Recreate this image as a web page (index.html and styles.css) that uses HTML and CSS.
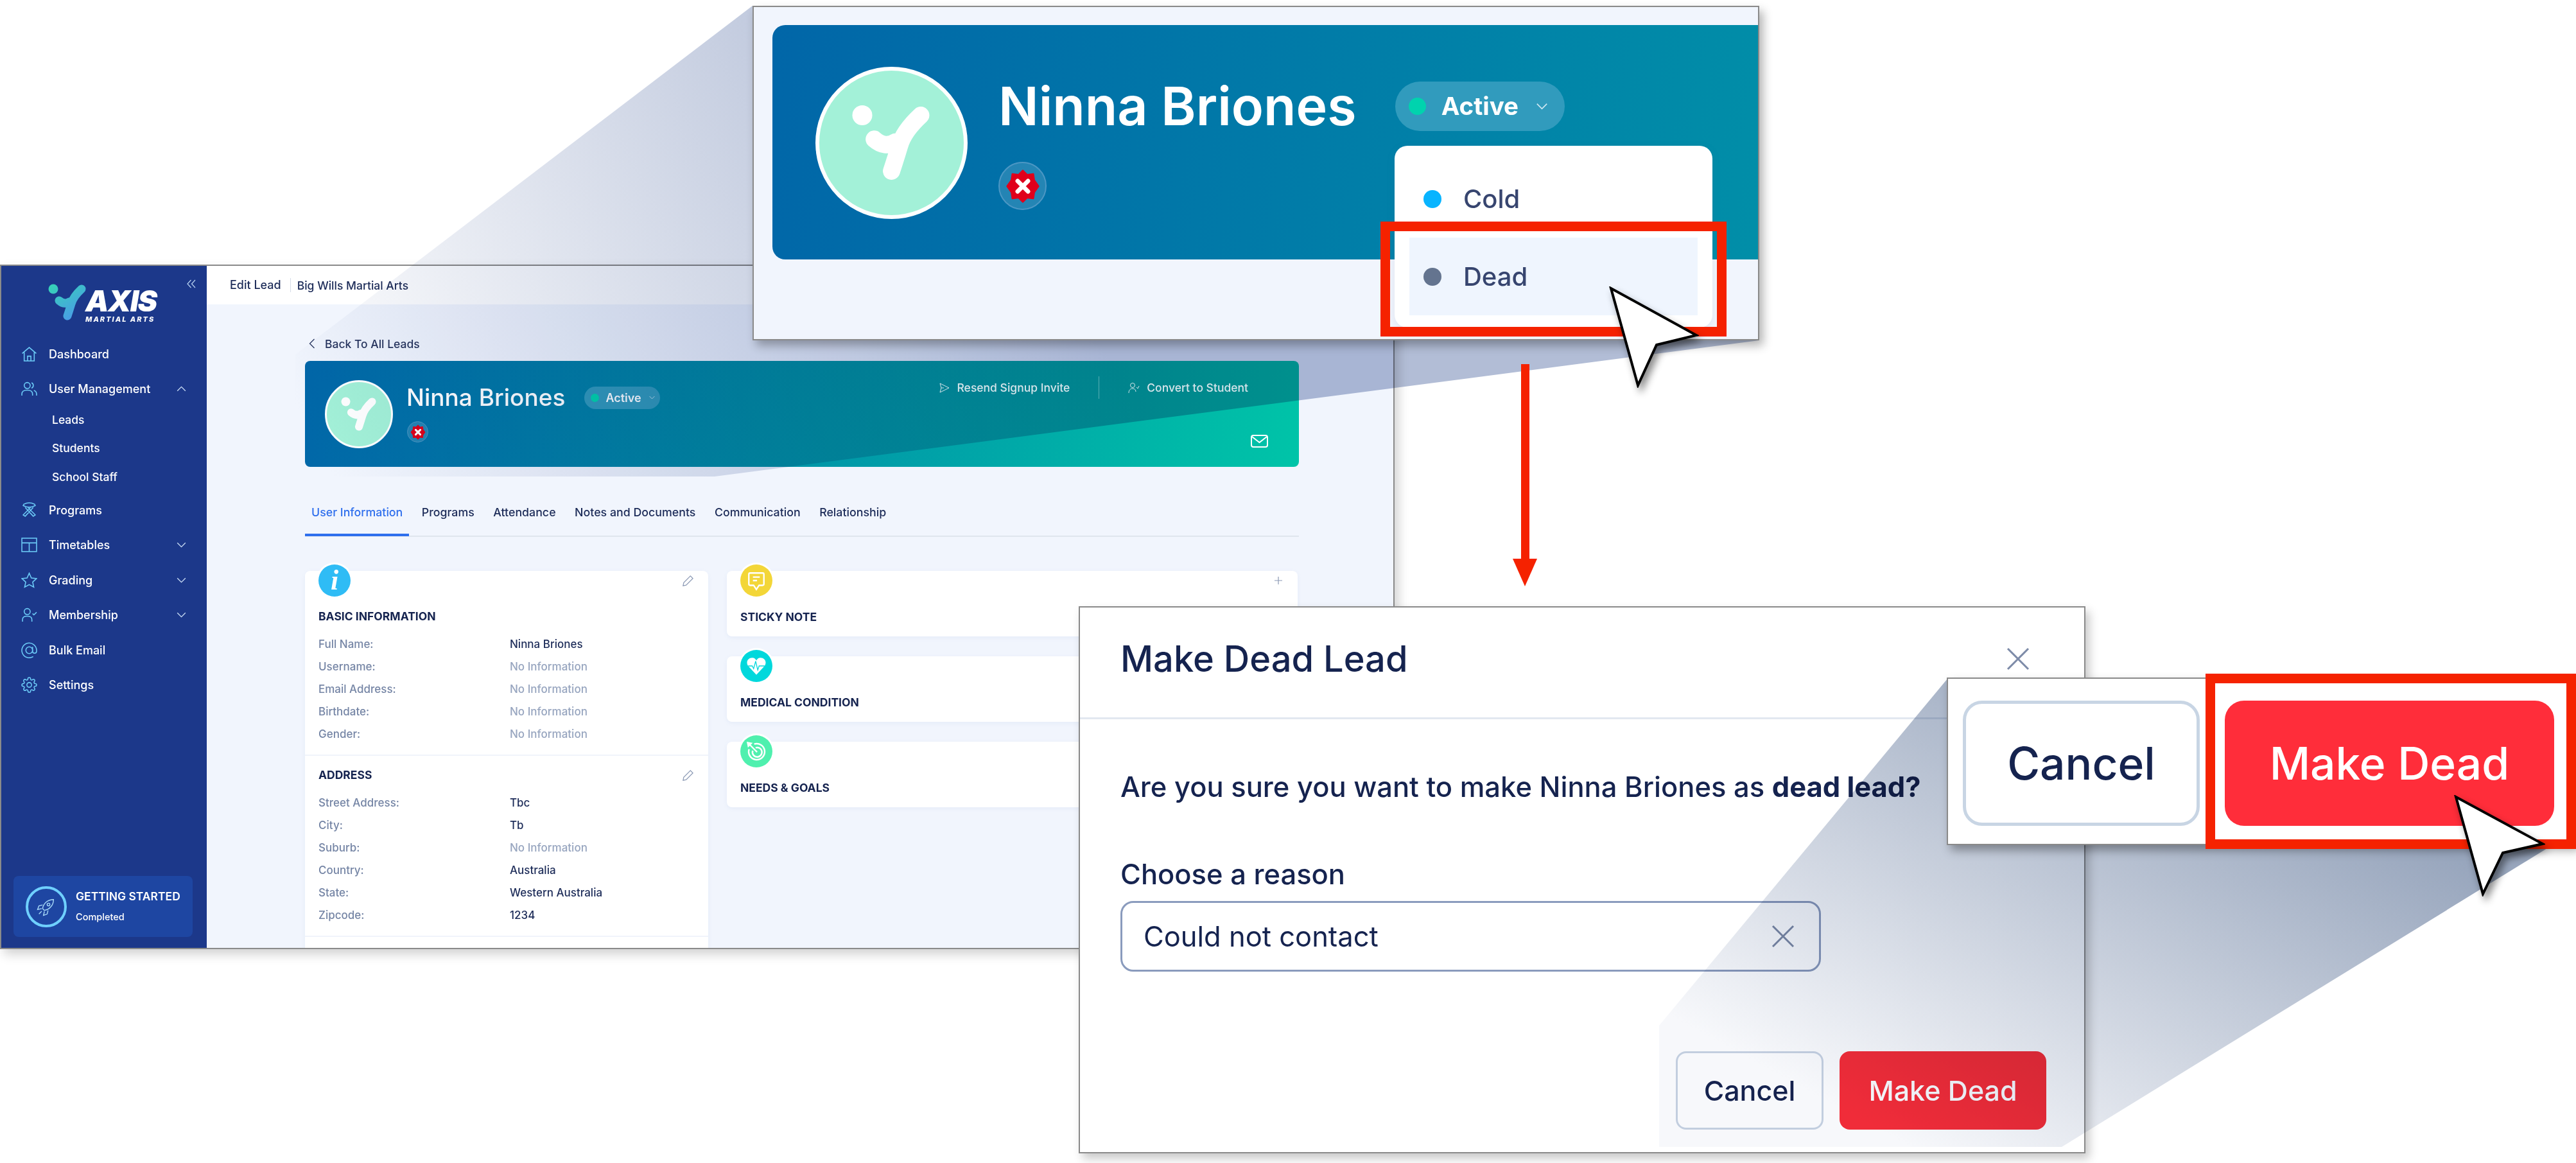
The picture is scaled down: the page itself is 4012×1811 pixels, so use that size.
FILE: index.html
```html
<!DOCTYPE html>
<html lang="en">
<head>
    <meta charset="UTF-8">
    <title>Make Dead Lead</title>
    <link rel="stylesheet" href="styles.css">
</head>
<body>

    <!-- Shared icons -->
    <svg class="defs" width="0" height="0">
        <defs>
            <linearGradient id="markGrad" gradientUnits="userSpaceOnUse" x1="0" y1="0" x2="36" y2="58">
                <stop offset="0" stop-color="#35d6b4"/>
                <stop offset="1" stop-color="#4a9be8"/>
            </linearGradient>
            <linearGradient id="fanOne" gradientUnits="userSpaceOnUse" x1="1500" y1="120" x2="470" y2="650">
                <stop offset="0" stop-color="#b2bdd6"/>
                <stop offset="1" stop-color="#ffffff"/>
            </linearGradient>
            <linearGradient id="fanTwo" gradientUnits="userSpaceOnUse" x1="3300" y1="1050" x2="2916" y2="1754">
                <stop offset="0" stop-color="#98a6bd"/>
                <stop offset="1" stop-color="#f7f8fb"/>
            </linearGradient>
            <symbol id="seal" viewBox="0 0 40 40">
                <polygon points="20,2 25,7 32,6 33,13 38,20 33,27 32,34 25,33 20,38 15,33 8,34 7,27 2,20 7,13 8,6 15,7" fill="#e0001b" stroke="#e0001b" stroke-width="2" stroke-linejoin="round"/>
                <path d="M14 14 L26 26 M26 14 L14 26" stroke="#fff" stroke-width="5" stroke-linecap="round"/>
            </symbol>
            <symbol id="chev" viewBox="0 0 16 10">
                <path d="M1 1.5 L8 8.5 L15 1.5" fill="none" stroke="currentColor" stroke-width="1.5"/>
            </symbol>
            <symbol id="cross" viewBox="0 0 36 36">
                <path d="M2 2 L34 34 M34 2 L2 34" fill="none" stroke="currentColor" stroke-width="3"/>
            </symbol>
        </defs>
    </svg>

    <!-- App window -->
    <div class="app">
        <aside class="sidebar">
            <div class="logo">
                <svg class="logo-mark" viewBox="0 0 60 58"><circle cx="8" cy="8" r="7.500" fill="url(#markGrad)"/><path d="M17 26 Q25 33 33 28 M52 8 Q39 20 36 31 Q33 41 30 50" fill="none" stroke="url(#markGrad)" stroke-width="13" stroke-linecap="round"/></svg>
                <div class="logo-text">
                    <span class="logo-axis">AXIS</span>
                    <span class="logo-sub">MARTIAL ARTS</span>
                </div>
                <svg class="collapse" viewBox="0 0 14 14"><path d="M6.5 1 L1 7 L6.5 13 M13 1 L7.500 7 L13 13" fill="none" stroke="currentColor" stroke-width="1.2"/></svg>
            </div>
            <nav class="side-nav">
                <a class="nav-item"><svg class="nav-icon" viewBox="0 0 24 24"><path d="M1.500 11 L12 2 L22.500 11 M4.500 9 V22 H19.500 V9 M9.500 22 V15 H14.500 V22"/></svg>Dashboard</a>
                <a class="nav-item"><svg class="nav-icon" viewBox="0 0 24 24"><circle cx="9" cy="7" r="4.500"/><path d="M1 22 V20 C1 16 4 14 9 14 S17 16 17 20 V22 M15.500 2.800 A4.500 4.500 0 0 1 15.500 11 M19 14.500 C22 15.500 23 17.500 23 20 V22"/></svg>User Management<svg class="nav-chev up"><use href="#chev"/></svg></a>
                <div class="sub-nav">
                    <a class="sub-item">Leads</a>
                    <a class="sub-item">Students</a>
                    <a class="sub-item">School Staff</a>
                </div>
                <a class="nav-item"><svg class="nav-icon" viewBox="0 0 24 24"><path d="M4 3 Q12 -1 20 3 L21 5 Q12 10 3 5 Z M6 8 L18 21 L21 19 L9 7 M18 8 L6 21 L3 19 L15 7"/></svg>Programs</a>
                <a class="nav-item"><svg class="nav-icon" viewBox="0 0 24 24"><rect x="1" y="2" width="22" height="20"/><path d="M1 9 H23 M12 9 V22"/></svg>Timetables<svg class="nav-chev"><use href="#chev"/></svg></a>
                <a class="nav-item"><svg class="nav-icon" viewBox="0 0 24 24"><polygon points="12,1.500 15.200,8.600 23,9.500 17.200,14.700 18.800,22.300 12,18.500 5.200,22.300 6.800,14.700 1,9.500 8.800,8.600"/></svg>Grading<svg class="nav-chev"><use href="#chev"/></svg></a>
                <a class="nav-item"><svg class="nav-icon" viewBox="0 0 24 24"><circle cx="9" cy="7" r="4.500"/><path d="M2 22 V19 C2 15.500 5 14 9 14 S16 15.500 16 19 V22 M17 10 L19 12 L23 8"/></svg>Membership<svg class="nav-chev"><use href="#chev"/></svg></a>
                <a class="nav-item"><svg class="nav-icon" viewBox="0 0 24 24"><circle cx="12" cy="12" r="5"/><path d="M17 7 V13.500 A3 3 0 0 0 23 13.500 V12 A11 11 0 1 0 18 21.500"/></svg>Bulk Email</a>
                <a class="nav-item"><svg class="nav-icon" viewBox="0 0 24 24"><circle cx="12" cy="12" r="3.500"/><path d="M19.400 15a1.650 1.650 0 0 0 .33 1.820l.06.06a2 2 0 0 1 0 2.830 2 2 0 0 1-2.830 0l-.06-.06a1.650 1.650 0 0 0-1.820-.33 1.650 1.650 0 0 0-1 1.510V21a2 2 0 0 1-2 2 2 2 0 0 1-2-2v-.09A1.650 1.650 0 0 0 9 19.400a1.650 1.650 0 0 0-1.820.33l-.06.06a2 2 0 0 1-2.830 0 2 2 0 0 1 0-2.830l.06-.06a1.650 1.650 0 0 0 .33-1.820 1.650 1.650 0 0 0-1.510-1H3a2 2 0 0 1-2-2 2 2 0 0 1 2-2h.09A1.650 1.650 0 0 0 4.600 9a1.650 1.650 0 0 0-.33-1.820l-.06-.06a2 2 0 0 1 0-2.830 2 2 0 0 1 2.830 0l.06.06a1.650 1.650 0 0 0 1.820.33H9a1.650 1.650 0 0 0 1-1.510V3a2 2 0 0 1 2-2 2 2 0 0 1 2 2v.09a1.650 1.650 0 0 0 1 1.510 1.650 1.650 0 0 0 1.820-.33l.06-.06a2 2 0 0 1 2.830 0 2 2 0 0 1 0 2.830l-.06.06a1.650 1.650 0 0 0-.33 1.820V9a1.650 1.650 0 0 0 1.510 1H21a2 2 0 0 1 2 2 2 2 0 0 1-2 2h-.09a1.650 1.650 0 0 0-1.510 1z"/></svg>Settings</a>
            </nav>
            <div class="started">
                <div class="started-ring">
                    <svg viewBox="0 0 24 24" width="34" height="34"><path d="M20 4 C14 4 9 8 8 14 L10 16 C16 15 20 10 20 4 Z M8 10 L4 11 L2.500 15 L7 14 M14 16 L13 20 L9 21.500 L10 17 M7 17 L4 20"/><circle cx="14.500" cy="9.500" r="1.500"/></svg>
                </div>
                <div class="started-text">
                    <div class="started-title">GETTING STARTED</div>
                    <div class="started-sub">Completed</div>
                </div>
            </div>
        </aside>

        <main class="main">
            <header class="topbar">
                <span class="topbar-title">Edit Lead</span>
                <span class="topbar-school">Big Wills Martial Arts</span>
            </header>

            <div class="content">
                <a class="back-link"><svg viewBox="0 0 10 16" width="10" height="16"><path d="M8.500 1 L1.500 8 L8.500 15" fill="none" stroke="currentColor" stroke-width="1.300"/></svg>Back To All Leads</a>

                <section class="banner">
                    <div class="avatar"><svg class="avatar-mark" viewBox="0 0 60 58"><circle cx="8" cy="8" r="7.500" fill="#fff"/><path d="M17 26 Q25 33 33 28 M52 8 Q39 20 36 31 Q33 41 30 50" fill="none" stroke="#fff" stroke-width="13" stroke-linecap="round"/></svg></div>
                    <div class="banner-id">
                        <div class="banner-name-row">
                            <h1 class="banner-name">Ninna Briones</h1>
                            <span class="pill"><i class="pill-dot"></i>Active<svg class="pill-chev"><use href="#chev"/></svg></span>
                        </div>
                        <span class="seal-wrap"><svg class="seal-icon"><use href="#seal"/></svg></span>
                    </div>
                    <div class="banner-side">
                        <div class="banner-actions">
                            <a class="banner-action"><svg viewBox="0 0 18 18" width="18" height="18"><path d="M2 2 L16 9 L2 16 L4 9 Z M4 9 H8" fill="none" stroke="currentColor" stroke-width="1"/></svg>Resend Signup Invite</a>
                            <a class="banner-action"><svg viewBox="0 0 18 18" width="18" height="18"><circle cx="7" cy="5" r="3.500" fill="none" stroke="currentColor"/><path d="M1 17 C1 12 4 10 7 10 S12 12 12 15 M13 8 L15 10 L17 6" fill="none" stroke="currentColor"/></svg>Convert to Student</a>
                        </div>
                        <svg class="mail-icon" viewBox="0 0 27 20"><rect x="1" y="1" width="25" height="18" rx="3" fill="none" stroke="#fff" stroke-width="2"/><path d="M2 3 L13.500 12 L25 3" fill="none" stroke="#fff" stroke-width="2"/></svg>
                    </div>
                </section>

                <nav class="tabs">
                    <a class="tab tab-active">User Information</a>
                    <a class="tab">Programs</a>
                    <a class="tab">Attendance</a>
                    <a class="tab">Notes and Documents</a>
                    <a class="tab">Communication</a>
                    <a class="tab">Relationship</a>
                </nav>

                <div class="cards">
                    <section class="card info-card">
                        <div class="card-head">
                            <span class="round-icon info-icon">i</span>
                            <svg class="pencil" viewBox="0 0 20 20"><path d="M2 18 L3 13 L14 2 L18 6 L7 17 Z" fill="none" stroke="#8c9ab5" stroke-width="1.300"/></svg>
                        </div>
                        <div class="info-section">
                            <h3 class="card-title">BASIC INFORMATION</h3>
                            <div class="rows">
                                <div class="row"><span class="row-label">Full Name:</span><span class="row-value">Ninna Briones</span></div>
                                <div class="row"><span class="row-label">Username:</span><span class="row-empty">No Information</span></div>
                                <div class="row"><span class="row-label">Email Address:</span><span class="row-empty">No Information</span></div>
                                <div class="row"><span class="row-label">Birthdate:</span><span class="row-empty">No Information</span></div>
                                <div class="row"><span class="row-label">Gender:</span><span class="row-empty">No Information</span></div>
                            </div>
                        </div>
                        <div class="info-section">
                            <div class="title-row">
                                <h3 class="card-title">ADDRESS</h3>
                                <svg class="pencil" viewBox="0 0 20 20"><path d="M2 18 L3 13 L14 2 L18 6 L7 17 Z" fill="none" stroke="#8c9ab5" stroke-width="1.300"/></svg>
                            </div>
                            <div class="rows">
                                <div class="row"><span class="row-label">Street Address:</span><span class="row-value">Tbc</span></div>
                                <div class="row"><span class="row-label">City:</span><span class="row-value">Tb</span></div>
                                <div class="row"><span class="row-label">Suburb:</span><span class="row-empty">No Information</span></div>
                                <div class="row"><span class="row-label">Country:</span><span class="row-value">Australia</span></div>
                                <div class="row"><span class="row-label">State:</span><span class="row-value">Western Australia</span></div>
                                <div class="row"><span class="row-label">Zipcode:</span><span class="row-value">1234</span></div>
                            </div>
                        </div>
                    </section>

                    <div class="side-cards">
                        <section class="card side-card">
                            <div class="card-head">
                                <span class="round-icon note-icon"><svg viewBox="0 0 30 30" width="32" height="32"><path d="M6 4 H24 A2 2 0 0 1 26 6 V20 A2 2 0 0 1 24 22 H19 L15 28 L11 22 H6 A2 2 0 0 1 4 20 V6 A2 2 0 0 1 6 4 Z M10 10 H20 M10 15 H16" fill="none" stroke="#fff" stroke-width="2.200"/></svg></span>
                                <svg class="plus" viewBox="0 0 12 12"><path d="M6 0 V12 M0 6 H12" stroke="#8c9ab5" stroke-width="1.200"/></svg>
                            </div>
                            <h3 class="card-title side-title">STICKY NOTE</h3>
                        </section>
                        <section class="card side-card">
                            <div class="card-head">
                                <span class="round-icon heart-icon"><svg viewBox="0 0 30 30" width="32" height="32"><path d="M15 28 L3 15 C-1 9 3 3 9 3 C12 3 14 5 15 7 C16 5 18 3 21 3 C27 3 31 9 27 15 Z" fill="#fff"/><path d="M3 15 H9 L11 19 L14 8 L17 21 L19 15 H27" fill="none" stroke="#00d8dc" stroke-width="1.200"/></svg></span>
                            </div>
                            <h3 class="card-title side-title">MEDICAL CONDITION</h3>
                        </section>
                        <section class="card side-card">
                            <div class="card-head">
                                <span class="round-icon goal-icon"><svg viewBox="0 0 30 30" width="34" height="34"><path d="M12 5 A11 11 0 1 1 5 12 M14 10 A6.500 6.500 0 1 1 10 14" fill="none" stroke="#fff" stroke-width="2.200"/><path d="M16 16 L6 6 M4 8 L3 3 L8 4 Z" fill="#fff" stroke="#fff" stroke-width="2"/></svg></span>
                            </div>
                            <h3 class="card-title side-title">NEEDS &amp; GOALS</h3>
                        </section>
                    </div>
                </div>
            </div>
        </main>
    </div>

    <!-- Zoom fan behind the first callout -->
    <svg class="fan" viewBox="0 0 4012 1811"><polygon points="1172,9 460,552 460,742 1113,742 2740,530" fill="url(#fanOne)"/></svg>

    <!-- First callout: status dropdown -->
    <div class="callout-top">
        <section class="big-banner">
            <div class="big-avatar"><svg class="big-avatar-mark" viewBox="0 0 60 58"><circle cx="8" cy="8" r="7.500" fill="#fff"/><path d="M17 26 Q25 33 33 28 M52 8 Q39 20 36 31 Q33 41 30 50" fill="none" stroke="#fff" stroke-width="13" stroke-linecap="round"/></svg></div>
            <div class="big-id">
                <div class="big-name-row">
                    <h2 class="big-name">Ninna Briones</h2>
                    <span class="big-pill"><i class="big-pill-dot"></i>Active<svg class="big-pill-chev"><use href="#chev"/></svg></span>
                </div>
                <span class="big-seal-wrap"><svg class="big-seal"><use href="#seal"/></svg></span>
            </div>
        </section>
        <div class="dropdown">
            <div class="drop-item"><i class="drop-dot dot-cold"></i>Cold</div>
            <div class="drop-item drop-hover"><i class="drop-dot dot-dead"></i>Dead</div>
        </div>
    </div>
    <div class="red-frame frame-dead"></div>
    <svg class="cursor cursor-one" viewBox="0 0 140 158"><polygon points="3,3 136,76 74,91 45,154" fill="#fff" stroke="#000" stroke-width="4" stroke-linejoin="miter"/></svg>

    <!-- Arrow between the steps -->
    <div class="arrow"><div class="arrow-line"></div><div class="arrow-head"></div></div>

    <!-- Dialog -->
    <div class="modal">
        <header class="modal-head">
            <h2 class="modal-title">Make Dead Lead</h2>
            <svg class="modal-x"><use href="#cross"/></svg>
        </header>
        <div class="modal-body">
            <p class="modal-question">Are you sure you want to make Ninna Briones as <b>dead lead?</b></p>
            <label class="modal-label">Choose a reason</label>
            <div class="reason">Could not contact<svg class="modal-x"><use href="#cross"/></svg></div>
        </div>
        <footer class="modal-foot">
            <button class="btn btn-cancel">Cancel</button>
            <button class="btn btn-dead">Make Dead</button>
        </footer>
    </div>

    <!-- Zoom fan behind the second callout -->
    <svg class="fan" viewBox="0 0 4012 1811"><polygon points="3033,1057 2584,1597 2584,1786 3211,1786 3985,1310" fill="url(#fanTwo)"/></svg>

    <!-- Second callout: buttons -->
    <div class="callout-btns">
        <button class="big-btn big-cancel">Cancel</button>
        <button class="big-btn big-dead">Make Dead</button>
    </div>
    <div class="red-frame frame-btn"></div>
    <svg class="cursor cursor-two" viewBox="0 0 142 158"><polygon points="3,3 138,76 76,90 45,154" fill="#fff" stroke="#000" stroke-width="4" stroke-linejoin="miter"/></svg>

</body>
</html>
```

FILE: styles.css
```css
/* General Page Styling */
html,
body {
    margin: 0;
    padding: 0;
    background: #fff;
}

body {
    position: relative;
    width: 4012px;
    height: 1811px;
    overflow: hidden;
    font-family: "Inter", "Liberation Sans", sans-serif;
    color: #15234f;
}

h1, h2, h3, p {
    margin: 0;
}

i {
    display: block;
}

.defs {
    position: absolute;
}

/* App window */
.app {
    position: absolute;
    left: 0;
    top: 412px;
    width: 2172px;
    height: 1066px;
    box-sizing: border-box;
    border: 2px solid #8a8a8a;
    box-shadow: 6px 8px 16px rgba(0, 0, 0, 0.18);
    background: #f1f5fd;
    display: flex;
    overflow: hidden;
}

/* Sidebar */
.sidebar {
    width: 320px;
    flex: none;
    background: #1c388a;
    color: #fff;
    display: flex;
    flex-direction: column;
    padding: 0 22px 17px 19px;
    box-sizing: border-box;
}

.logo {
    position: relative;
    height: 110px;
    display: flex;
    margin: 0 -22px 0 -19px;
}

.logo-mark {
    width: 60px;
    height: 58px;
    margin: 28px 0 0 73px;
}

.logo-text {
    display: flex;
    flex-direction: column;
    margin: 31px 0 0 -2px;
    font-style: italic;
    line-height: 1;
}

.logo-axis {
    font-size: 46px;
    font-weight: 900;
    letter-spacing: -1.5px;
}

.logo-sub {
    font-size: 11px;
    font-weight: 800;
    letter-spacing: 2px;
    margin-top: 1px;
}

.collapse {
    position: absolute;
    left: 289px;
    top: 21px;
    width: 14px;
    height: 14px;
    color: #b9d4f2;
}

.side-nav {
    margin: 0 -22px 0 -19px;
    display: flex;
    flex-direction: column;
}

.nav-item {
    height: 54.4px;
    display: flex;
    align-items: center;
    gap: 18px;
    padding: 0 32px 0 31px;
    font-size: 18px;
    font-weight: 500;
}

.nav-icon {
    width: 25px;
    height: 25px;
    flex: none;
    fill: none;
    stroke: #6ccbf7;
    stroke-width: 1.5;
}

.nav-chev {
    width: 15px;
    height: 9px;
    margin-left: auto;
    color: #c9dcf5;
}

.nav-chev.up {
    transform: scaleY(-1);
}

.sub-nav {
    display: flex;
    flex-direction: column;
    margin: -2px 0 3px;
}

.sub-item {
    height: 44.5px;
    display: flex;
    align-items: center;
    padding-left: 79px;
    font-size: 17.5px;
    font-weight: 500;
}

.started {
    margin-top: auto;
    height: 95px;
    background: #1e46a2;
    border-radius: 8px;
    display: flex;
    align-items: center;
    gap: 14px;
    padding-left: 19px;
}

.started-ring {
    width: 64px;
    height: 64px;
    box-sizing: border-box;
    border: 4px solid #6fd0ff;
    border-radius: 50%;
    display: flex;
    align-items: center;
    justify-content: center;
}

.started-ring svg {
    fill: none;
    stroke: #a7d9f7;
    stroke-width: 1;
}

.started-title {
    font-size: 17.5px;
    font-weight: 600;
    line-height: 20px;
}

.started-sub {
    font-size: 14.5px;
    font-weight: 500;
    line-height: 20px;
    margin-top: 12px;
}

/* Main column */
.main {
    flex: 1;
    min-width: 0;
    display: flex;
    flex-direction: column;
}

.topbar {
    height: 60px;
    flex: none;
    background: #fff;
    display: flex;
    align-items: center;
    padding-left: 36px;
    font-size: 18px;
    font-weight: 500;
    color: #1c2b58;
}

.topbar-title {
    padding-right: 14px;
    margin-right: 10px;
    border-right: 1px solid #d5dce8;
    line-height: 22px;
}

.topbar-school {
    font-size: 17.5px;
}

.content {
    padding: 49px 147px 0 153px;
}

.back-link {
    display: flex;
    align-items: center;
    gap: 15px;
    height: 24px;
    padding-left: 6px;
    font-size: 17.5px;
    font-weight: 500;
    color: #27355f;
}

/* Small banner */
.banner {
    margin-top: 15px;
    height: 165px;
    border-radius: 8px;
    background: linear-gradient(100deg, #0166a8 0%, #00c4a8 100%);
    display: flex;
    color: #fff;
    padding-left: 31px;
}

.avatar {
    width: 106px;
    height: 106px;
    margin-top: 30px;
    box-sizing: border-box;
    border: 3px solid #fff;
    border-radius: 50%;
    background: #a3f1d8;
    display: flex;
    align-items: center;
    justify-content: center;
    flex: none;
}

.avatar-mark {
    width: 56px;
    height: 54px;
}

.banner-id {
    margin: 36px 0 0 21px;
}

.banner-name-row {
    display: flex;
    align-items: center;
    gap: 30px;
}

.banner-name {
    font-size: 37px;
    font-weight: 500;
    line-height: 42px;
    white-space: nowrap;
}

.pill {
    height: 35px;
    width: 118px;
    box-sizing: border-box;
    border-radius: 18px;
    background: #319bbd;
    display: flex;
    align-items: center;
    padding-left: 10px;
    font-size: 18px;
    font-weight: 600;
}

.pill-dot {
    width: 13px;
    height: 13px;
    border-radius: 50%;
    background: #00d3ae;
    margin-right: 10px;
}

.pill-chev {
    width: 9px;
    height: 6px;
    margin-left: 12px;
    color: #cfe8f2;
}

.seal-wrap {
    display: flex;
    align-items: center;
    justify-content: center;
    width: 33px;
    height: 33px;
    margin: 16px 0 0 1px;
    box-sizing: border-box;
    border-radius: 50%;
    border: 1px solid #4c97c4;
    background: rgba(255, 255, 255, 0.14);
}

.seal-icon {
    width: 24px;
    height: 24px;
}

.banner-side {
    margin-left: auto;
    padding: 24px 79px 0 0;
    display: flex;
    flex-direction: column;
}

/* lifted over the zoom fan so the labels keep their own colour */
.banner-actions {
    position: relative;
    z-index: 1;
    display: flex;
}

.banner-action {
    display: flex;
    align-items: center;
    gap: 11px;
    height: 35px;
    font-size: 17.5px;
    font-weight: 500;
    color: #d5e4ea;
    white-space: nowrap;
}

.banner-action + .banner-action {
    margin-left: 45px;
    padding-left: 45px;
    border-left: 1px solid rgba(255, 255, 255, 0.35);
}

.mail-icon {
    width: 27px;
    height: 20px;
    align-self: flex-end;
    margin: 56px -31px 0 0;
}

/* Tabs */
.tabs {
    margin-top: 49px;
    display: flex;
    gap: 9.5px;
    border-bottom: 2px solid #dfe5ee;
}

.tab {
    padding: 10px 10px 21px;
    line-height: 24px;
    border-bottom: 4px solid transparent;
    margin-bottom: -1px;
    font-size: 17.8px;
    font-weight: 500;
    color: #1c2b58;
}

.tab-active {
    color: #2f6fed;
    border-bottom-color: #2f6fed;
}

/* Cards */
.cards {
    margin-top: 53px;
    display: grid;
    grid-template-columns: 628px 889px;
    gap: 29px;
    align-items: start;
}

.card {
    background: #fff;
    border-radius: 8px;
    box-shadow: 0 2px 6px rgba(150, 170, 210, 0.12);
    padding: 0 22px 0 21px;
}

.card-head {
    display: flex;
    justify-content: space-between;
    align-items: center;
    margin-top: -10px;
}

.round-icon {
    width: 50px;
    height: 50px;
    border-radius: 50%;
    box-shadow: 0 0 0 3px #fff;
    display: flex;
    align-items: center;
    justify-content: center;
}

.info-icon {
    background: #2fbcf5;
    color: #fff;
    font-family: "Liberation Serif", serif;
    font-style: italic;
    font-weight: 700;
    font-size: 44px;
    line-height: 50px;
}

.note-icon {
    background: #f3d638;
}

.heart-icon {
    background: #00d8dc;
}

.goal-icon {
    background: #4ff0ae;
}

.pencil {
    width: 19px;
    height: 19px;
}

.plus {
    width: 12px;
    height: 12px;
    margin-right: 2px;
}

.card-title {
    font-size: 17.5px;
    font-weight: 700;
    line-height: 24px;
    color: #15234f;
}

.info-card {
    min-height: 620px;
}

.info-section {
    margin: 0 -22px 0 -21px;
    padding: 0 22px 15px 21px;
    border-bottom: 2px solid #f0f4fb;
}

.info-card .card-head + .info-section {
    padding-top: 19px;
}

.info-section + .info-section {
    padding-top: 18px;
}

.title-row {
    display: flex;
    justify-content: space-between;
    align-items: center;
}

.rows {
    margin-top: 13px;
}

.row {
    height: 35px;
    display: grid;
    grid-template-columns: 298px 1fr;
    align-items: center;
    font-size: 17px;
    font-weight: 500;
}

.row-label {
    color: #7585a5;
}

.row-value {
    color: #1c2b58;
}

.row-empty {
    color: #97a5bf;
}

.side-cards {
    display: flex;
    flex-direction: column;
    gap: 31px;
}

.side-card {
    height: 102px;
    box-sizing: border-box;
}

.side-title {
    margin-top: 20px;
}

/* First callout */
.fan {
    position: absolute;
    left: 0;
    top: 0;
    width: 4012px;
    height: 1811px;
    mix-blend-mode: multiply;
}

.callout-top {
    position: absolute;
    left: 1172px;
    top: 9px;
    width: 1568px;
    height: 521px;
    box-sizing: border-box;
    border: 2px solid #8a8a8a;
    background: #f1f5fd;
    box-shadow: 6px 8px 14px rgba(0, 0, 0, 0.3);
    overflow: hidden;
    padding: 28px 0 0 29px;
}

.big-banner {
    width: 1600px;
    height: 365px;
    border-radius: 20px;
    background: linear-gradient(100deg, #0166a8 0%, #0190a8 100%);
    display: flex;
    color: #fff;
    padding-left: 67px;
    box-sizing: border-box;
}

.big-avatar {
    width: 237px;
    height: 237px;
    margin-top: 65px;
    box-sizing: border-box;
    border: 6px solid #fff;
    border-radius: 50%;
    background: #a3f1d8;
    display: flex;
    align-items: center;
    justify-content: center;
    flex: none;
}

.big-avatar-mark {
    width: 125px;
    height: 120px;
}

.big-id {
    margin: 77px 0 0 48px;
}

.big-name-row {
    display: flex;
    align-items: center;
    gap: 60px;
}

.big-name {
    font-size: 82.5px;
    font-weight: 600;
    line-height: 98px;
    white-space: nowrap;
}

.big-pill {
    width: 264px;
    height: 77px;
    box-sizing: border-box;
    border-radius: 39px;
    background: #319bbd;
    display: flex;
    align-items: center;
    padding-left: 21px;
    font-size: 38.5px;
    font-weight: 700;
}

.big-pill-dot {
    width: 27px;
    height: 27px;
    border-radius: 50%;
    background: #00d3ae;
    margin-right: 24px;
}

.big-pill-chev {
    width: 19px;
    height: 11px;
    margin-left: 27px;
    color: #cfe8f2;
}

.big-seal-wrap {
    display: flex;
    align-items: center;
    justify-content: center;
    width: 75px;
    height: 75px;
    margin-top: 38px;
    box-sizing: border-box;
    border-radius: 50%;
    border: 2px solid #4c97c4;
    background: rgba(255, 255, 255, 0.14);
}

.big-seal {
    width: 54px;
    height: 54px;
}

.dropdown {
    position: absolute;
    left: 998px;
    top: 216px;
    width: 495px;
    height: 283px;
    box-sizing: border-box;
    padding: 22px 23px 16px;
    border-radius: 20px;
    background: #fff;
    box-shadow: 0 4px 14px rgba(90, 110, 150, 0.12);
}

.drop-item {
    height: 121px;
    display: flex;
    align-items: center;
    gap: 34px;
    padding-left: 22px;
    font-size: 40px;
    font-weight: 500;
    color: #37456f;
}

.drop-hover {
    background: #eff5fe;
}

.drop-dot {
    width: 28px;
    height: 28px;
    border-radius: 50%;
}

.dot-cold {
    background: #08b4ff;
}

.dot-dead {
    background: #64748f;
}

.red-frame {
    position: absolute;
    box-sizing: border-box;
    border: 15px solid #f52200;
}

.frame-dead {
    left: 2150px;
    top: 345px;
    width: 539px;
    height: 179px;
}

.frame-btn {
    left: 3435px;
    top: 1049px;
    width: 577px;
    height: 273px;
}

.cursor {
    position: absolute;
    filter: drop-shadow(5px 8px 6px rgba(0, 0, 0, 0.45));
}

.cursor-one {
    left: 2506px;
    top: 446px;
    width: 140px;
    height: 158px;
}

.cursor-two {
    left: 3822px;
    top: 1238px;
    width: 142px;
    height: 158px;
}

/* Arrow */
.arrow {
    position: absolute;
    left: 2356px;
    top: 567px;
    width: 38px;
    display: flex;
    flex-direction: column;
    align-items: center;
}

.arrow-line {
    width: 13px;
    height: 303px;
    background: #f52200;
}

.arrow-head {
    width: 0;
    height: 0;
    border-left: 19px solid transparent;
    border-right: 19px solid transparent;
    border-top: 43px solid #f52200;
}

/* Dialog */
.modal {
    position: absolute;
    left: 1680px;
    top: 944px;
    width: 1568px;
    height: 852px;
    box-sizing: border-box;
    border: 2px solid #8a8a8a;
    background: #fff;
    box-shadow: 6px 8px 14px rgba(0, 0, 0, 0.22);
    display: flex;
    flex-direction: column;
}

.modal-head {
    height: 174px;
    flex: none;
    box-sizing: border-box;
    border-bottom: 3px solid #e2e8f0;
    display: flex;
    align-items: center;
    justify-content: space-between;
    padding: 0 85px 12px 63px;
}

.modal-title {
    font-size: 56px;
    font-weight: 500;
    line-height: 70px;
}

.modal-x {
    width: 36px;
    height: 36px;
    color: #7d8ba8;
    flex: none;
}

.modal-body {
    padding: 75px 63px 0;
}

.modal-question {
    font-size: 43.5px;
    font-weight: 500;
    line-height: 60px;
}

.modal-question b {
    font-weight: 700;
}

.modal-label {
    display: block;
    margin-top: 81px;
    font-size: 43.5px;
    font-weight: 500;
    line-height: 50px;
}

.reason {
    margin-top: 17px;
    width: 1091px;
    height: 110px;
    box-sizing: border-box;
    border: 3px solid #8a9bbd;
    border-radius: 20px;
    display: flex;
    align-items: center;
    justify-content: space-between;
    padding: 0 38px 0 33px;
    font-size: 43.5px;
}

.modal-foot {
    margin-top: auto;
    display: flex;
    justify-content: flex-end;
    gap: 25px;
    padding: 0 59px 35px 0;
}

.btn {
    height: 122px;
    border-radius: 16px;
    font-family: inherit;
    font-size: 43px;
    font-weight: 500;
}

.btn-cancel {
    width: 230px;
    border: 3px solid #c9d4e3;
    background: transparent;
    color: #15234f;
}

.btn-dead {
    width: 322px;
    border: 0;
    background: #f82d3a;
    color: #fff;
}

/* Second callout */
.callout-btns {
    position: absolute;
    left: 3032px;
    top: 1055px;
    width: 980px;
    height: 261px;
    box-sizing: border-box;
    border: 2px solid #8a8a8a;
    background: #fff;
    box-shadow: 6px 8px 14px rgba(0, 0, 0, 0.35);
    display: flex;
    gap: 39px;
    padding: 34px 0 0 23px;
}

.big-btn {
    height: 195px;
    border-radius: 30px;
    font-family: inherit;
    font-size: 69.5px;
    font-weight: 500;
}

.big-cancel {
    width: 369px;
    border: 5px solid #c8d5e4;
    background: #fff;
    color: #15234f;
}

.big-dead {
    width: 513px;
    border: 0;
    background: #ff2d3a;
    color: #fff;
}
```
